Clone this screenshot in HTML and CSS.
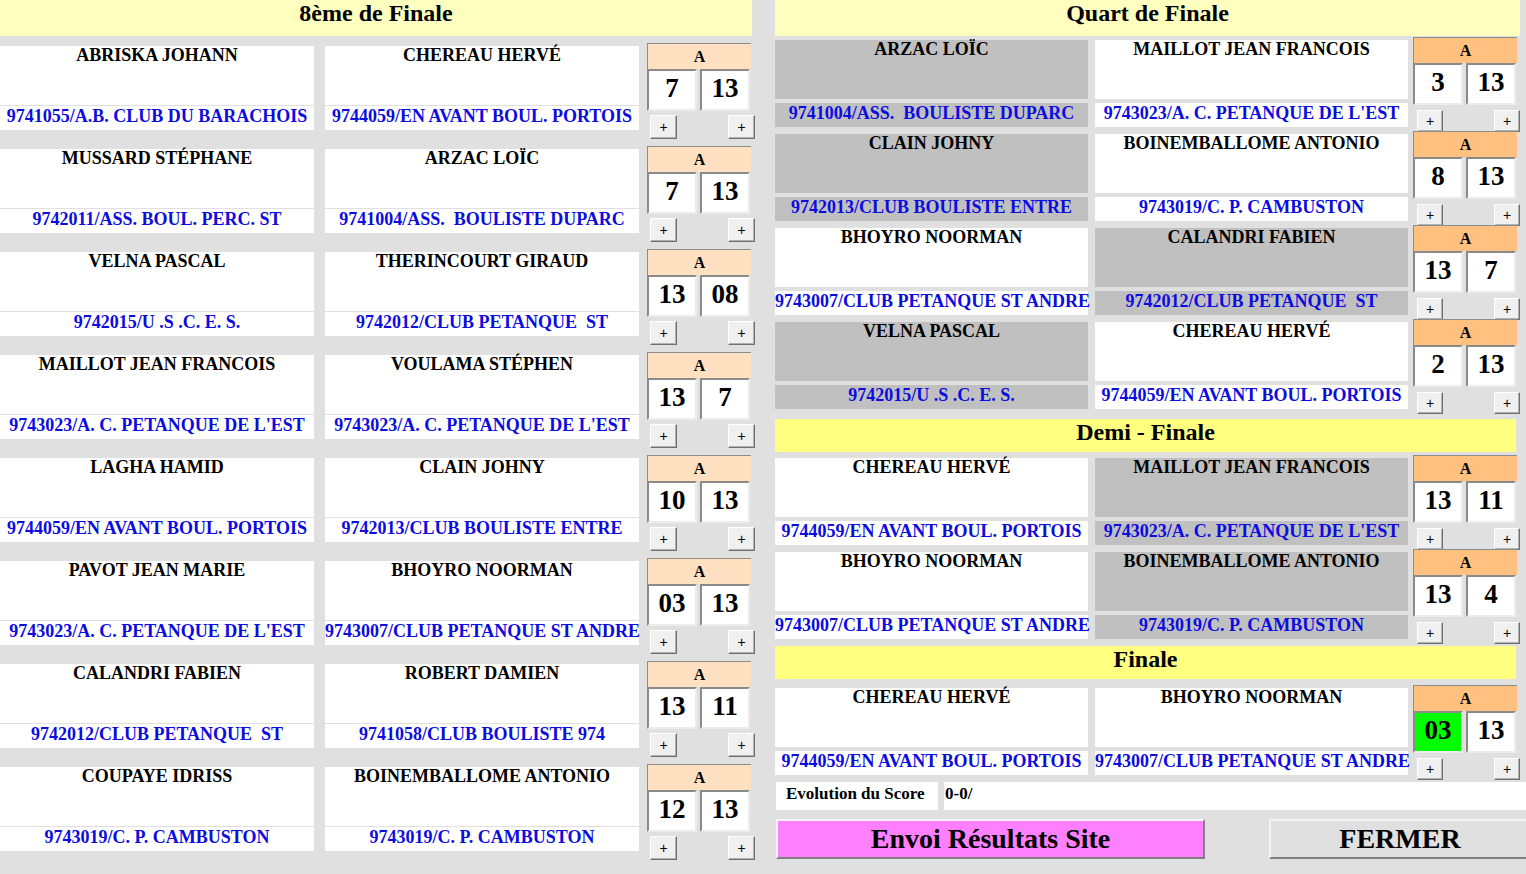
FILE: index.html
```
<!DOCTYPE html>
<html lang="fr">
<head>
<meta charset="utf-8">
<title>Tableau Finales</title>
<link rel="stylesheet" href="styles.css">
</head>
<body>
<div class="page">
  <section class="left">
    <div class="hdr hdr-pale">8ème de Finale</div>
    <div class="rows8">
      <div class="match m8">
        <div class="pl"><div class="nm">ABRISKA JOHANN</div><div class="cl">9741055/A.B. CLUB DU BARACHOIS</div></div>
        <div class="pl pl2"><div class="nm">CHEREAU HERVÉ</div><div class="cl">9744059/EN AVANT BOUL. PORTOIS</div></div>
        <div class="sc sc8"><div class="ah">A</div><div class="svr"><div class="sv">7</div><div class="sv">13</div></div><div class="btns"><button class="pb">+</button><button class="pb">+</button></div></div>
      </div>
      <div class="match m8">
        <div class="pl"><div class="nm">MUSSARD STÉPHANE</div><div class="cl">9742011/ASS. BOUL. PERC. ST</div></div>
        <div class="pl pl2"><div class="nm">ARZAC LOÏC</div><div class="cl">9741004/ASS.&nbsp; BOULISTE DUPARC</div></div>
        <div class="sc sc8"><div class="ah">A</div><div class="svr"><div class="sv">7</div><div class="sv">13</div></div><div class="btns"><button class="pb">+</button><button class="pb">+</button></div></div>
      </div>
      <div class="match m8">
        <div class="pl"><div class="nm">VELNA PASCAL</div><div class="cl">9742015/U .S .C. E. S.</div></div>
        <div class="pl pl2"><div class="nm">THERINCOURT GIRAUD</div><div class="cl">9742012/CLUB PETANQUE&nbsp; ST</div></div>
        <div class="sc sc8"><div class="ah">A</div><div class="svr"><div class="sv">13</div><div class="sv">08</div></div><div class="btns"><button class="pb">+</button><button class="pb">+</button></div></div>
      </div>
      <div class="match m8">
        <div class="pl"><div class="nm">MAILLOT JEAN FRANCOIS</div><div class="cl">9743023/A. C. PETANQUE DE L'EST</div></div>
        <div class="pl pl2"><div class="nm">VOULAMA STÉPHEN</div><div class="cl">9743023/A. C. PETANQUE DE L'EST</div></div>
        <div class="sc sc8"><div class="ah">A</div><div class="svr"><div class="sv">13</div><div class="sv">7</div></div><div class="btns"><button class="pb">+</button><button class="pb">+</button></div></div>
      </div>
      <div class="match m8">
        <div class="pl"><div class="nm">LAGHA HAMID</div><div class="cl">9744059/EN AVANT BOUL. PORTOIS</div></div>
        <div class="pl pl2"><div class="nm">CLAIN JOHNY</div><div class="cl">9742013/CLUB BOULISTE ENTRE</div></div>
        <div class="sc sc8"><div class="ah">A</div><div class="svr"><div class="sv">10</div><div class="sv">13</div></div><div class="btns"><button class="pb">+</button><button class="pb">+</button></div></div>
      </div>
      <div class="match m8">
        <div class="pl"><div class="nm">PAVOT JEAN MARIE</div><div class="cl">9743023/A. C. PETANQUE DE L'EST</div></div>
        <div class="pl pl2"><div class="nm">BHOYRO NOORMAN</div><div class="cl">9743007/CLUB PETANQUE ST ANDRE</div></div>
        <div class="sc sc8"><div class="ah">A</div><div class="svr"><div class="sv">03</div><div class="sv">13</div></div><div class="btns"><button class="pb">+</button><button class="pb">+</button></div></div>
      </div>
      <div class="match m8">
        <div class="pl"><div class="nm">CALANDRI FABIEN</div><div class="cl">9742012/CLUB PETANQUE&nbsp; ST</div></div>
        <div class="pl pl2"><div class="nm">ROBERT DAMIEN</div><div class="cl">9741058/CLUB BOULISTE 974</div></div>
        <div class="sc sc8"><div class="ah">A</div><div class="svr"><div class="sv">13</div><div class="sv">11</div></div><div class="btns"><button class="pb">+</button><button class="pb">+</button></div></div>
      </div>
      <div class="match m8">
        <div class="pl"><div class="nm">COUPAYE IDRISS</div><div class="cl">9743019/C. P. CAMBUSTON</div></div>
        <div class="pl pl2"><div class="nm">BOINEMBALLOME ANTONIO</div><div class="cl">9743019/C. P. CAMBUSTON</div></div>
        <div class="sc sc8"><div class="ah">A</div><div class="svr"><div class="sv">12</div><div class="sv">13</div></div><div class="btns"><button class="pb">+</button><button class="pb">+</button></div></div>
      </div>
    </div>
  </section>

  <section class="right">
    <div class="hdr hdr-pale hq">Quart de Finale</div>
    <div class="rowsq">
      <div class="match mq">
        <div class="pl grey"><div class="nm">ARZAC LOÏC</div><div class="cl">9741004/ASS.&nbsp; BOULISTE DUPARC</div></div>
        <div class="pl pl2"><div class="nm">MAILLOT JEAN FRANCOIS</div><div class="cl">9743023/A. C. PETANQUE DE L'EST</div></div>
        <div class="sc scq"><div class="ah">A</div><div class="svr"><div class="sv">3</div><div class="sv">13</div></div><div class="btns"><button class="pb">+</button><button class="pb">+</button></div></div>
      </div>
      <div class="match mq">
        <div class="pl grey"><div class="nm">CLAIN JOHNY</div><div class="cl">9742013/CLUB BOULISTE ENTRE</div></div>
        <div class="pl pl2"><div class="nm">BOINEMBALLOME ANTONIO</div><div class="cl">9743019/C. P. CAMBUSTON</div></div>
        <div class="sc scq"><div class="ah">A</div><div class="svr"><div class="sv">8</div><div class="sv">13</div></div><div class="btns"><button class="pb">+</button><button class="pb">+</button></div></div>
      </div>
      <div class="match mq">
        <div class="pl"><div class="nm">BHOYRO NOORMAN</div><div class="cl">9743007/CLUB PETANQUE ST ANDRE</div></div>
        <div class="pl pl2 grey"><div class="nm">CALANDRI FABIEN</div><div class="cl">9742012/CLUB PETANQUE&nbsp; ST</div></div>
        <div class="sc scq"><div class="ah">A</div><div class="svr"><div class="sv">13</div><div class="sv">7</div></div><div class="btns"><button class="pb">+</button><button class="pb">+</button></div></div>
      </div>
      <div class="match mq">
        <div class="pl grey"><div class="nm">VELNA PASCAL</div><div class="cl">9742015/U .S .C. E. S.</div></div>
        <div class="pl pl2"><div class="nm">CHEREAU HERVÉ</div><div class="cl">9744059/EN AVANT BOUL. PORTOIS</div></div>
        <div class="sc scq"><div class="ah">A</div><div class="svr"><div class="sv">2</div><div class="sv">13</div></div><div class="btns"><button class="pb">+</button><button class="pb">+</button></div></div>
      </div>
    </div>

    <div class="hdr hdr-bright hd">Demi - Finale</div>
    <div class="rowsd">
      <div class="match mq">
        <div class="pl"><div class="nm">CHEREAU HERVÉ</div><div class="cl">9744059/EN AVANT BOUL. PORTOIS</div></div>
        <div class="pl pl2 grey"><div class="nm">MAILLOT JEAN FRANCOIS</div><div class="cl">9743023/A. C. PETANQUE DE L'EST</div></div>
        <div class="sc scq"><div class="ah">A</div><div class="svr"><div class="sv">13</div><div class="sv">11</div></div><div class="btns"><button class="pb">+</button><button class="pb">+</button></div></div>
      </div>
      <div class="match mq">
        <div class="pl"><div class="nm">BHOYRO NOORMAN</div><div class="cl">9743007/CLUB PETANQUE ST ANDRE</div></div>
        <div class="pl pl2 grey"><div class="nm">BOINEMBALLOME ANTONIO</div><div class="cl">9743019/C. P. CAMBUSTON</div></div>
        <div class="sc scq"><div class="ah">A</div><div class="svr"><div class="sv">13</div><div class="sv">4</div></div><div class="btns"><button class="pb">+</button><button class="pb">+</button></div></div>
      </div>
    </div>

    <div class="hdr hdr-bright hf">Finale</div>
    <div class="rowsf">
      <div class="match mq">
        <div class="pl"><div class="nm">CHEREAU HERVÉ</div><div class="cl">9744059/EN AVANT BOUL. PORTOIS</div></div>
        <div class="pl pl2"><div class="nm">BHOYRO NOORMAN</div><div class="cl">9743007/CLUB PETANQUE ST ANDRE</div></div>
        <div class="sc scq"><div class="ah">A</div><div class="svr"><div class="sv sv-win">03</div><div class="sv">13</div></div><div class="btns"><button class="pb">+</button><button class="pb">+</button></div></div>
      </div>
    </div>

    <div class="evo"><div class="evo-l">Evolution du Score</div><div class="evo-v">0-0/</div></div>
    <div class="actions"><button class="btn btn-send">Envoi Résultats Site</button><button class="btn btn-close">FERMER</button></div>
  </section>
</div>
</body>
</html>
```
FILE: styles.css
```
* { box-sizing: border-box; }
html, body { margin: 0; padding: 0; }
body {
  background: #e0e0e0;
  font-family: "Liberation Serif", "Times New Roman", serif;
  font-weight: bold;
  color: #000;
  overflow: hidden;
}
.page { display: flex; width: 1526px; height: 874px; overflow: hidden; }
.left { width: 752px; flex: none; }
.right { width: 751px; margin-left: 23px; flex: none; }

.hdr { height: 36px; text-align: center; font-size: 24px; line-height: 26px; }
.hdr-pale { background: #ffffc0; }
.hq { width: 745px; }
.hdr-bright { background: #ffff80; width: 741px; height: 33px; }
.hd { margin-top: 6px; }
.hf { margin-top: 3px; }

.rows8 { padding-top: 7px; }
.rowsq { margin-top: 1px; }
.rowsd { margin-top: 3px; }
.rowsf { margin-top: 6px; }

.match { display: flex; align-items: flex-start; }
.m8 { height: 103px; }
.mq { height: 94px; }

.pl { width: 314px; margin-top: 3px; flex: none; }
.m8 .pl2 { margin-left: 11px; }
.m8 .sc { margin-left: 8px; }
.mq .pl { width: 313px; }
.mq .pl2 { margin-left: 7px; }
.mq .sc { margin-left: 5px; }

.nm {
  height: 59px;
  background: #fff;
  text-align: center;
  font-size: 18px;
  line-height: 19px;
  white-space: nowrap;
}
.cl {
  height: 25px;
  border-top: 1px solid #e0e0e0;
  background: #fff;
  color: #0c0ce0;
  text-align: center;
  font-size: 18px;
  line-height: 20px;
  white-space: nowrap;
}
.mq .cl { height: 28px; border-top-width: 4px; }
.grey .nm, .grey .cl { background: #c0c0c0; }

.sc { width: 104px; flex: none; }
.ah {
  height: 26px;
  border-top: 1px solid #8c8c8c;
  border-left: 1px solid #8c8c8c;
  text-align: center;
  font-size: 16px;
  line-height: 25px;
}
.sc8 .ah { background: #ffe0c0; }
.scq .ah { background: #ffc080; }
.svr { display: flex; gap: 3px; }
.sv {
  width: 50px;
  height: 42px;
  background: #fff;
  border: 2px solid;
  border-color: #8a8a8a #ececec #ececec #8a8a8a;
  text-align: center;
  font-size: 27px;
  line-height: 35px;
}
.sv-win { background: #00ff00; }
.btns {
  display: flex;
  justify-content: space-between;
  margin-top: 4px;
  padding-left: 3px;
  margin-right: -4px;
}
.mq .btns { padding-left: 4px; margin-top: 5px; margin-right: -3px; }
.pb {
  width: 27px;
  height: 24px;
  padding: 0;
  background: #f0f0f0;
  border: 1px solid;
  border-color: #ffffff #707070 #707070 #ffffff;
  box-shadow: inset -1px -1px 0 #b0b0b0;
  font-family: "Liberation Sans", Arial, sans-serif;
  font-weight: normal;
  font-size: 14px;
  line-height: 20px;
  color: #000;
}
.mq .pb { height: 22px; width: 26px; }

.evo { display: flex; margin-top: 3px; height: 28px; font-size: 17px; }
.evo-l { margin-left: 1px; width: 162px; background: #fff; padding-left: 10px; line-height: 24px; }
.evo-v { margin-left: 6px; flex: 1; background: #fff; padding-left: 1px; line-height: 24px; }

.actions { display: flex; margin-top: 9px; height: 40px; overflow: hidden; }
.btn {
  height: 40px;
  border: 2px solid;
  border-color: #f4f4f4 #808080 #808080 #f4f4f4;
  font-family: "Liberation Serif", "Times New Roman", serif;
  font-weight: bold;
  font-size: 28px;
  color: #000;
  padding: 0;
  flex: none;
}
.btn-send { margin-left: 1px; width: 429px; background: #ff80ff; }
.btn-close { margin-left: 64px; width: 262px; background: #e0e0e0; }
```
